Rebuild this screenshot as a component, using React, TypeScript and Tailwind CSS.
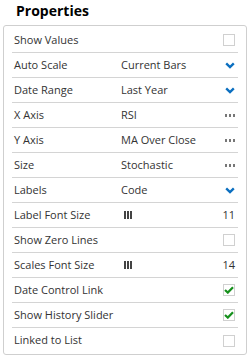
type Kind = "check" | "checked" | "select" | "dots" | "slider";

interface Row {
  label: string;
  value?: string;
  kind: Kind;
  num?: string;
}

const rows: Row[] = [
  { label: "Show Values", kind: "check" },
  { label: "Auto Scale", value: "Current Bars", kind: "select" },
  { label: "Date Range", value: "Last Year", kind: "select" },
  { label: "X Axis", value: "RSI", kind: "dots" },
  { label: "Y Axis", value: "MA Over Close", kind: "dots" },
  { label: "Size", value: "Stochastic", kind: "dots" },
  { label: "Labels", value: "Code", kind: "select" },
  { label: "Label Font Size", kind: "slider", num: "11" },
  { label: "Show Zero Lines", kind: "check" },
  { label: "Scales Font Size", kind: "slider", num: "14" },
  { label: "Date Control Link", kind: "checked" },
  { label: "Show History Slider", kind: "checked" },
  { label: "Linked to List", kind: "check" },
];

function Chevron() {
  return (
    <svg width="10" height="7" viewBox="0 0 10 7" className="text-[#0b6fc0]">
      <path d="M1.2 1.4 L5 5 L8.8 1.4" fill="none" stroke="currentColor" strokeWidth="2.4" />
    </svg>
  );
}

function Dots() {
  return (
    <div className="flex gap-[2px]">
      <span className="w-[2px] h-[3px] bg-[#777]" />
      <span className="w-[2px] h-[3px] bg-[#777]" />
      <span className="w-[2px] h-[3px] bg-[#777]" />
    </div>
  );
}

function Box({ checked }: { checked?: boolean }) {
  return (
    <div className="w-[12px] h-[12px] border border-[#d0d0d0] bg-white flex items-center justify-center">
      {checked && (
        <svg width="10" height="8" viewBox="0 0 10 8" className="text-[#16901c]">
          <path d="M1 4 L3.8 6.6 L9 1.2" fill="none" stroke="currentColor" strokeWidth="2.2" />
        </svg>
      )}
    </div>
  );
}

function Bars() {
  return (
    <div className="flex gap-[1px]">
      <span className="w-[2px] h-[8px] bg-[#444]" />
      <span className="w-[2px] h-[8px] bg-[#444]" />
      <span className="w-[2px] h-[8px] bg-[#444]" />
    </div>
  );
}

export default function App() {
  return (
    <div className="w-[250px] h-[358px] bg-white font-['Open_Sans',sans-serif] text-[#333]">
      <h2 className="pl-[16px] pt-[1px] h-[25px] text-[14px] font-bold text-black leading-[20px]">Properties</h2>
      <div className="mx-[3px] border border-[#cfcfcf] rounded-[3px] pt-[2px] pb-[1px]">
        {rows.map((r, i) => (
          <div
            key={r.label}
            className={`mx-[8px] h-[25px] flex items-center text-[11px] ${
              i < rows.length - 1 ? "border-b border-[#d4d4d4]" : ""
            }`}
          >
            <span className="pl-[2px] w-[109px] shrink-0">{r.label}</span>
            <span className="flex-1 flex items-center">
              {r.value}
              {r.kind === "slider" && (
                <span className="pl-[3px]">
                  <Bars />
                </span>
              )}
            </span>
            <span className="w-[20px] pr-[3px] flex justify-end items-center">
              {r.kind === "select" && <Chevron />}
              {r.kind === "dots" && <Dots />}
              {r.kind === "check" && <Box />}
              {r.kind === "checked" && <Box checked />}
              {r.kind === "slider" && <span>{r.num}</span>}
            </span>
          </div>
        ))}
      </div>
    </div>
  );
}
